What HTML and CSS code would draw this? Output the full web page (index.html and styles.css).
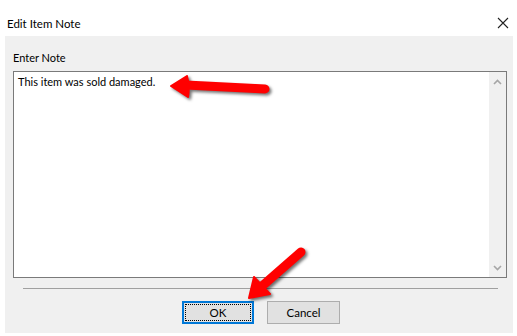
FILE: index.html
```html
<!DOCTYPE html>
<html>
<head>
<meta charset="utf-8">
<link rel="stylesheet" href="styles.css">
</head>
<body>
<div class="window">
  <div class="titlebar">
    <span class="title">Edit Item Note</span>
    <svg class="close" width="12" height="12" viewBox="0 0 12 12"><path d="M1 1 L11 11 M11 1 L1 11" stroke="#222" stroke-width="1.1" fill="none"/></svg>
  </div>
  <div class="panel">
    <div class="label">Enter Note</div>
    <div class="notebox">
      <div class="notetext">This item was sold damaged.</div>
      <div class="scrollbar">
        <svg width="17" height="10" viewBox="0 0 17 10"><path d="M5 7 L8.5 3.5 L12 7" stroke="#a6a6a6" stroke-width="1.6" fill="none"/></svg>
        <svg width="17" height="10" viewBox="0 0 17 10"><path d="M5 3 L8.5 6.5 L12 3" stroke="#a6a6a6" stroke-width="1.6" fill="none"/></svg>
      </div>
    </div>
    <div class="separator"></div>
    <div class="buttons">
      <button class="btn btn-default"><span class="focus">OK</span></button>
      <button class="btn">Cancel</button>
    </div>
  </div>
</div>
<svg class="arrows" width="517" height="336" viewBox="0 0 517 336">
  <g class="arrow">
    <path d="M186 85 L265 89" stroke="#f00" stroke-width="9" stroke-linecap="round" fill="none"/>
    <path d="M171 86 L187 76 Q190 86 188 97 Z" fill="#f00" stroke="#f00" stroke-width="2" stroke-linejoin="round"/>
  </g>
  <g class="arrow">
    <path d="M261 287 L301 252" stroke="#f00" stroke-width="9" stroke-linecap="round" fill="none"/>
    <path d="M249 298 L254 277 L270 294 Z" fill="#f00" stroke="#f00" stroke-width="2" stroke-linejoin="round"/>
  </g>
</svg>
</body>
</html>
```
FILE: styles.css
```css
html, body {
  margin: 0;
  padding: 0;
  background: #ffffff;
}
body {
  width: 517px;
  height: 336px;
  position: relative;
  overflow: hidden;
  font-family: Lato, "Liberation Sans", Arial, sans-serif;
  font-size: 11px;
  color: #000;
}
.window {
  display: flex;
  flex-direction: column;
  height: 336px;
}
.titlebar {
  height: 36px;
  display: flex;
  align-items: center;
  justify-content: space-between;
  padding: 10px 8px 0 7px;
  box-sizing: border-box;
}
.title {
  font-size: 11.5px;
}
.panel {
  background: #f0f0f0;
  margin: 0 4px 3px 5px;
  flex: 1;
  padding: 14px 6px 0 8px;
  display: flex;
  flex-direction: column;
}
.label {
  line-height: 16px;
  height: 16px;
}
.notebox {
  margin-top: 5px;
  height: 207px;
  border: 1px solid #7a7a7a;
  background: #fff;
  box-sizing: border-box;
  display: flex;
}
.notetext {
  flex: 1;
  padding: 2px 4px;
  line-height: 16px;
}
.scrollbar {
  width: 17px;
  background: #f0f0f0;
  display: flex;
  flex-direction: column;
  justify-content: space-between;
  padding: 5px 0 4px;
}
.separator {
  margin: 10px 9px 0 10px;
  height: 1px;
  border-top: 1px solid #a0a0a0;
}
.buttons {
  display: flex;
  justify-content: center;
  gap: 13px;
  margin-top: 11px;
  padding-left: 2px;
}
.btn {
  width: 73px;
  height: 23px;
  background: #e1e1e1;
  border: 1px solid #adadad;
  font-family: Lato, "Liberation Sans", Arial, sans-serif;
  font-size: 11.5px;
  color: #000;
  padding: 0;
  display: flex;
  align-items: center;
  justify-content: center;
}
.btn-default {
  width: 72px;
  border: 2px solid #0078d7;
  padding: 1px;
}
.focus {
  flex: 1;
  align-self: stretch;
  display: flex;
  align-items: center;
  justify-content: center;
  outline: 1px dotted #000;
  outline-offset: -1px;
}
.arrows {
  position: absolute;
  top: 0;
  left: 0;
  pointer-events: none;
}
.arrow {
  filter: drop-shadow(2px 2px 1.5px rgba(0, 0, 0, 0.55));
}
```
